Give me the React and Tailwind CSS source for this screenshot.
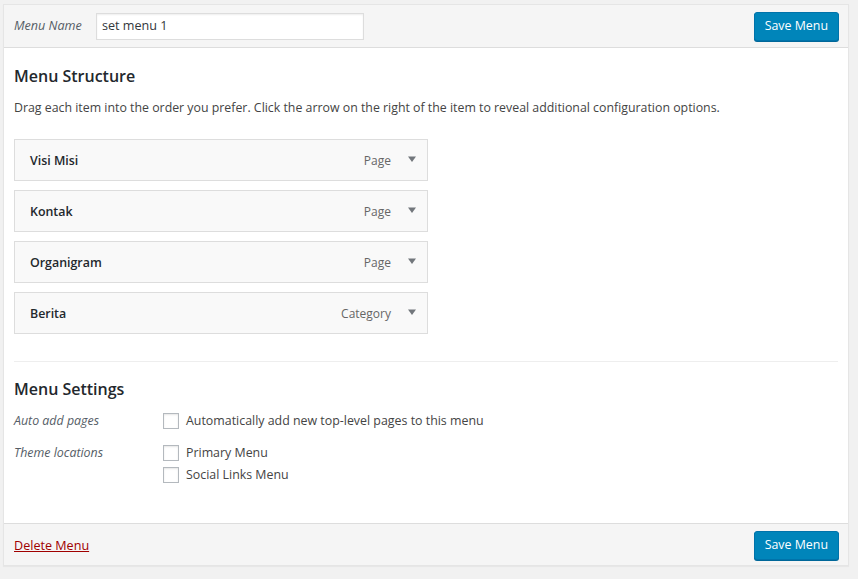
import React from "react";

const font = { fontFamily: '"Open Sans", "Noto Sans", sans-serif' };

function Caret() {
  return (
    <svg width="10" height="8" viewBox="0 0 10 8" className="block">
      <path d="M1 1.5 L9 1.5 L5 7 Z" fill="#72777c" />
    </svg>
  );
}

function Item({ title, type }) {
  return (
    <div className="flex h-[42px] w-[414px] items-center border border-[#dddddd] bg-[#f9f9f9] pl-[15px] pr-[10px] pt-[3px]">
      <span className="flex-1 text-[12.4px] font-semibold text-[#23282d]">{title}</span>
      <span className="text-[12px] text-[#666666]">{type}</span>
      <span className="ml-[16px] mt-[-5px]"><Caret /></span>
    </div>
  );
}

function Box() {
  return <span className="block h-[16px] w-[16px] shrink-0 border border-[#b4b9be] bg-white shadow-[inset_0_1px_2px_rgba(0,0,0,0.1)]" />;
}

function SaveBtn() {
  return (
    <button className="h-[29px] rounded-[3px] border border-[#0073aa] bg-[#0085ba] px-[10px] text-[12.4px] text-white shadow-[0_1px_0_#006799]">
      Save Menu
    </button>
  );
}

export default function App() {
  return (
    <div className="min-h-[579px] bg-[#f1f1f1] pl-[3px] pr-[9px] pt-[4px]" style={font}>
      <div className="border border-[#e5e5e5] bg-white shadow-[0_1px_1px_rgba(0,0,0,0.04)]">
        {/* header */}
        <div className="flex h-[43px] items-center justify-between border-b border-[#dddddd] bg-[#f5f5f5] pl-[10px] pr-[9px]">
          <div className="flex items-center">
            <span className="w-[82px] text-[12.6px] italic text-[#555d66]">Menu Name</span>
            <div className="flex h-[27px] w-[268px] items-center border border-[#dddddd] bg-white px-[5px] text-[12.6px] text-[#32373c] shadow-[inset_0_1px_2px_rgba(0,0,0,0.07)]">
              set menu 1
            </div>
          </div>
          <SaveBtn />
        </div>

        {/* body */}
        <div className="px-[10px] pb-[40px]">
          <div className="pt-[16px] text-[16px] font-semibold leading-[24px] text-[#23282d]">Menu Structure</div>
          <div className="mt-[11px] text-[12.35px] text-[#444444]">
            Drag each item into the order you prefer. Click the arrow on the right of the item to reveal additional configuration options.
          </div>
          <div className="mt-[21px] flex flex-col gap-[9px]">
            <Item title="Visi Misi" type="Page" />
            <Item title="Kontak" type="Page" />
            <Item title="Organigram" type="Page" />
            <Item title="Berita" type="Category" />
          </div>
          <div className="mt-[27px] border-t border-[#eeeeee]" />
          <div className="pt-[15px] text-[16px] font-semibold leading-[24px] text-[#23282d]">Menu Settings</div>
          <div className="mt-[12px] flex text-[12.4px] leading-[16px]">
            <div className="w-[149px] italic text-[#555d66]">Auto add pages</div>
            <label className="flex items-center gap-[7px] text-[#444444]">
              <Box /> Automatically add new top-level pages to this menu
            </label>
          </div>
          <div className="mt-[16px] flex text-[12.4px] leading-[16px]">
            <div className="w-[149px] italic text-[#555d66]">Theme locations</div>
            <div className="flex flex-col gap-[6px]">
              <label className="flex items-center gap-[7px] text-[#444444]">
                <Box /> Primary Menu
              </label>
              <label className="flex items-center gap-[7px] text-[#444444]">
                <Box /> Social Links Menu
              </label>
            </div>
          </div>
        </div>

        {/* footer */}
        <div className="flex h-[42px] items-center justify-between border-t border-[#dddddd] bg-[#f5f5f5] pl-[10px] pr-[9px] pt-[2px]">
          <a href="#" className="pt-[3px] text-[12.6px] text-[#a00000] underline">Delete Menu</a>
          <SaveBtn />
        </div>
      </div>
    </div>
  );
}
